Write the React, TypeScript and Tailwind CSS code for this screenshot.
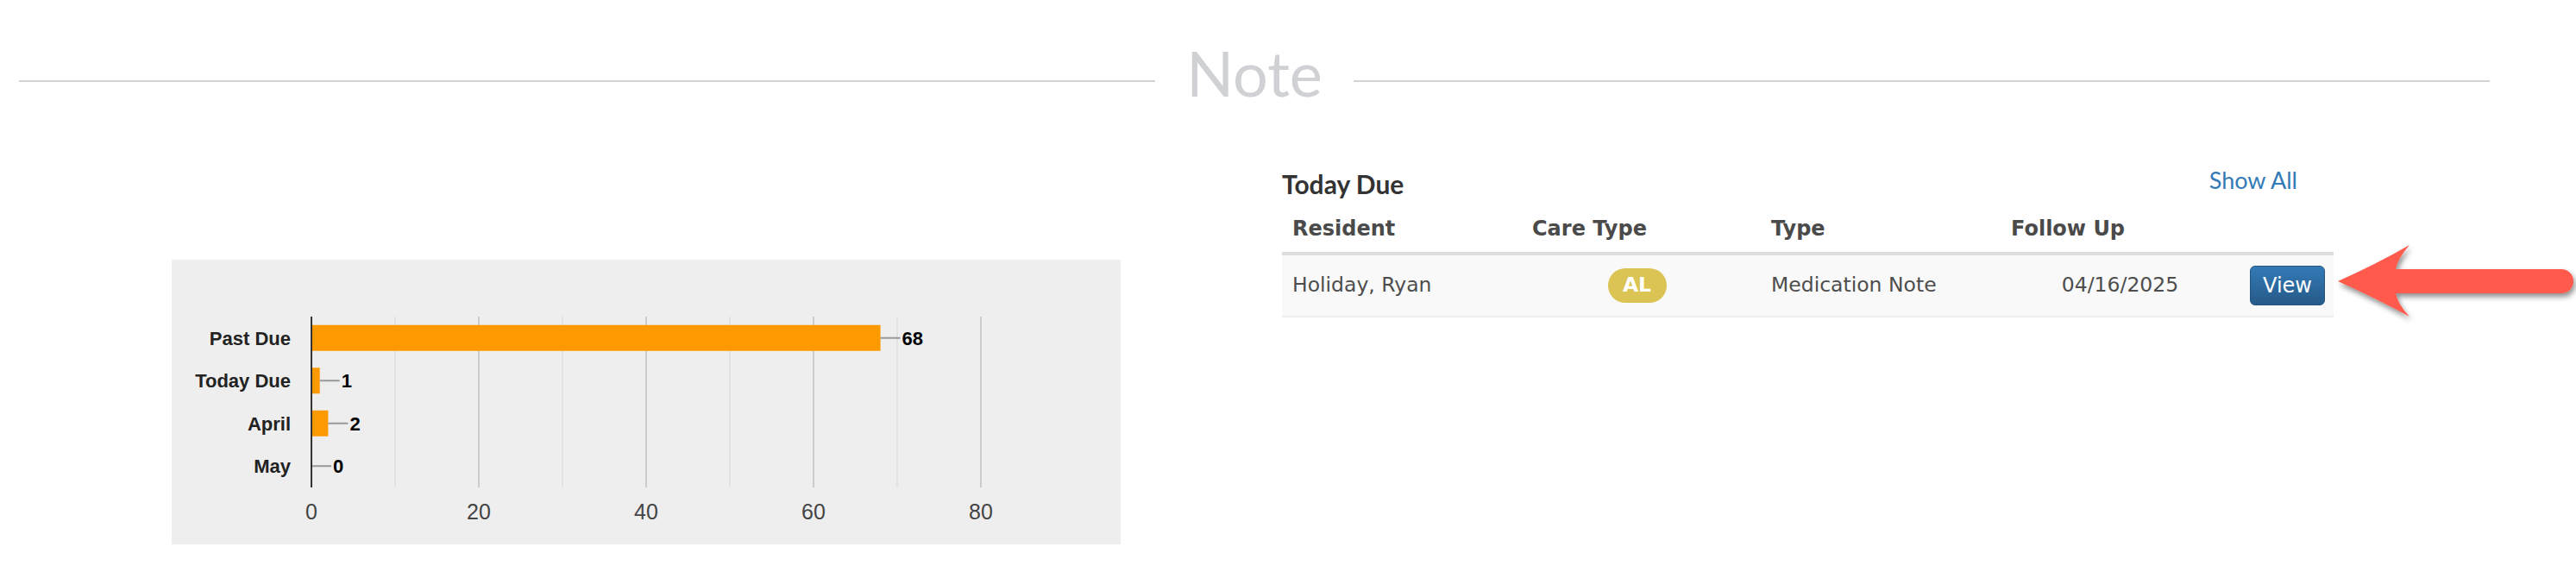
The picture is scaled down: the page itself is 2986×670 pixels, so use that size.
import React from "react";

const rows = [
  { label: "Past Due", value: 68 },
  { label: "Today Due", value: 1 },
  { label: "April", value: 2 },
  { label: "May", value: 0 },
];

const X0 = 162;
const UNIT = 9.7;
const TOP = 66;
const BOTTOM = 264;
const ROW_H = (BOTTOM - TOP) / rows.length;

function NoteChart() {
  const grid = [1, 2, 3, 4, 5, 6, 7, 8];
  return (
    <svg width="1100" height="330" viewBox="0 0 1100 330" className="block font-['Liberation_Sans',Arial,sans-serif]">
      {grid.map((k) => (
        <line
          key={k}
          x1={X0 + k * 97}
          x2={X0 + k * 97}
          y1={TOP}
          y2={BOTTOM}
          stroke={k % 2 === 0 ? "#cccccc" : "#e2e2e2"}
          strokeWidth="2"
        />
      ))}
      {rows.map((r, i) => {
        const cy = TOP + ROW_H * i + ROW_H / 2;
        const end = X0 + r.value * UNIT;
        return (
          <g key={r.label}>
            <text x="138" y={cy + 8} textAnchor="end" fontSize="22" fontWeight="700" fill="#222222">
              {r.label}
            </text>
            {r.value > 0 && <rect x={X0} y={cy - 15} width={end - X0} height="30" fill="#ff9900" />}
            <line x1={end} x2={end + 23} y1={cy} y2={cy} stroke="#999999" strokeWidth="2" />
            <text x={end + 25} y={cy + 8} fontSize="22" fontWeight="700" fill="#000000">
              {r.value}
            </text>
          </g>
        );
      })}
      <line x1={X0} x2={X0} y1={TOP} y2={BOTTOM} stroke="#333333" strokeWidth="2" />
      {[0, 20, 40, 60, 80].map((v) => (
        <text key={v} x={X0 + v * UNIT} y="301" textAnchor="middle" fontSize="25" fill="#444444">
          {v}
        </text>
      ))}
    </svg>
  );
}

function Arrow() {
  return (
    <svg width="300" height="120" viewBox="0 0 300 120" className="absolute left-[2700px] top-[270px]">
      <defs>
        <filter id="arrowShadow" x="-20%" y="-30%" width="140%" height="160%">
          <feDropShadow dx="2" dy="4" stdDeviation="3" floodColor="#000000" floodOpacity="0.45" />
        </filter>
      </defs>
      <path
        d="M10 56 Q55 36 93 14 Q79 30 77 42 L269 42 A14 14 0 0 1 269 70 L77 70 Q79 82 93 97 Q55 76 10 56 Z"
        fill="#ff5a4b"
        filter="url(#arrowShadow)"
      />
    </svg>
  );
}

export default function App() {
  const cols = "grid grid-cols-[278px_277px_278px_277px_109px]";
  return (
    <div className="relative w-[2986px] h-[670px] bg-white">
      {/* section title */}
      <div className="flex items-start pl-[22px] w-[2886px] pt-[48px]">
        <div className="flex-1 h-[2px] bg-[#d3d3d6] mt-[45px]" />
        <h2 className="px-[36px] text-[72px] leading-none font-normal text-[#d0d1d5] font-['Lato',sans-serif]">
          Note
        </h2>
        <div className="flex-1 h-[2px] bg-[#d3d3d6] mt-[45px]" />
      </div>

      <div className="flex items-start">
        <div className="ml-[199px] mt-[181px] w-[1100px] h-[330px] bg-[#eeeeee]">
          <NoteChart />
        </div>

        <div className="ml-[187px] mt-[74px] w-[1219px]">
          <div className="flex justify-between items-start pr-[42px]">
            <h3 className="mt-[4px] text-[30px] leading-none font-bold text-[#333333] font-['Lato',sans-serif]">
              Today Due
            </h3>
            <a className="mt-[1px] text-[27px] leading-none text-[#337ab7] font-['Lato',sans-serif]">Show All</a>
          </div>

          <div className={`${cols} mt-[25px] pb-[15px] border-b-4 border-[#dddddd] text-[24px] leading-none font-bold text-[#4a4a4a] font-['DejaVu_Sans',sans-serif]`}>
            <div className="px-3">Resident</div>
            <div className="px-3">Care Type</div>
            <div className="px-3">Type</div>
            <div className="px-3">Follow Up</div>
            <div className="px-3" />
          </div>

          <div className={`${cols} items-center h-[72px] bg-[#f9f9f9] border-b-2 border-[#eeeeee] text-[23.5px] leading-none text-[#4d4d4d] font-['DejaVu_Sans',sans-serif]`}>
            <div className="px-3">Holiday, Ryan</div>
            <div className="pl-3 pr-[22px] flex justify-center">
              <span className="flex items-center justify-center w-[68px] h-[40px] rounded-full bg-[#dbc453] text-white font-bold">
                AL
              </span>
            </div>
            <div className="px-3">Medication Note</div>
            <div className="px-3 text-center">04/16/2025</div>
            <div className="px-3">
              <button className="flex items-center justify-center w-[87px] h-[46px] rounded-[6px] border border-[#245580] bg-linear-to-b from-[#337ab7] to-[#265a88] text-white text-[24px] leading-none">
                View
              </button>
            </div>
          </div>
        </div>
      </div>

      <Arrow />
    </div>
  );
}
